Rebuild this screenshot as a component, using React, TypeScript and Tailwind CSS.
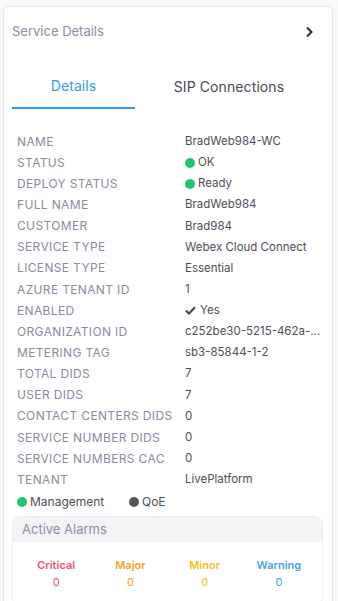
import React from "react";

const rows: { label: string; value: React.ReactNode }[] = [
  { label: "NAME", value: "BradWeb984-WC" },
  { label: "STATUS", value: <Dot text="OK" /> },
  { label: "DEPLOY STATUS", value: <Dot text="Ready" /> },
  { label: "FULL NAME", value: "BradWeb984" },
  { label: "CUSTOMER", value: "Brad984" },
  { label: "SERVICE TYPE", value: "Webex Cloud Connect" },
  { label: "LICENSE TYPE", value: "Essential" },
  { label: "AZURE TENANT ID", value: "1" },
  {
    label: "ENABLED",
    value: (
      <span className="flex items-center gap-[4px]">
        <svg width="11" height="9" viewBox="0 0 11 9">
          <path d="M1 4.6 L4 7.5 L10 1.2" fill="none" stroke="#4a4a55" strokeWidth="2.2" />
        </svg>
        Yes
      </span>
    ),
  },
  { label: "ORGANIZATION ID", value: "c252be30-5215-462a-..." },
  { label: "METERING TAG", value: "sb3-85844-1-2" },
  { label: "TOTAL DIDS", value: "7" },
  { label: "USER DIDS", value: "7" },
  { label: "CONTACT CENTERS DIDS", value: "0" },
  { label: "SERVICE NUMBER DIDS", value: "0" },
  { label: "SERVICE NUMBERS CAC", value: "0" },
  { label: "TENANT", value: "LivePlatform" },
];

function Dot({ text }: { text: string }) {
  return (
    <span className="flex items-center gap-[3px]">
      <span className="inline-block w-[10px] h-[10px] rounded-full bg-[#22c473]" />
      {text}
    </span>
  );
}

export default function App() {
  return (
    <div
      className="w-[338px] h-[601px] bg-[#f9f9fa] pt-[6px] pl-[3px] overflow-hidden"
      style={{ fontFamily: "Inter, 'Noto Sans', sans-serif" }}
    >
      <div className="w-[330px] h-[620px] bg-white border border-[#e6e6ea] rounded-[4px] px-[8px]">
        <div className="flex items-center justify-between h-[50px] pr-[10px]">
          <span className="text-[13px] text-[#8e8ea3]">Service Details</span>
          <svg width="9" height="12" viewBox="0 0 9 12">
            <path d="M2 1.5 L6.5 6 L2 10.5" fill="none" stroke="#2b2b33" strokeWidth="2" />
          </svg>
        </div>
        <div className="flex mt-[7px] h-[45px]">
          <div className="w-[123px] flex items-center justify-center border-b-2 border-[#2f9bf0] text-[14px] text-[#3a98ec] tracking-[0.1px]">
            Details
          </div>
          <div className="w-[188px] flex items-center justify-center text-[14px] text-[#4a4a52] tracking-[0.1px]">
            SIP Connections
          </div>
        </div>
        <div className="mt-[22px] pl-[5px]">
          {rows.map((r) => (
            <div key={r.label} className="flex items-center h-[21.15px] whitespace-nowrap">
              <span className="w-[168px] text-[12px] tracking-[0.35px] text-[#8a8aa0]">{r.label}</span>
              <span className="text-[11.5px] text-[#4e4e58]">{r.value}</span>
            </div>
          ))}
          <div className="flex items-center h-[21px] text-[12px] text-[#4e4e58] mt-[1px]">
            <span className="flex items-center gap-[3px] w-[112px]">
              <span className="inline-block w-[10px] h-[10px] rounded-full bg-[#22c473]" />
              Management
            </span>
            <span className="flex items-center gap-[3px]">
              <span className="inline-block w-[10px] h-[10px] rounded-full bg-[#555559]" />
              QoE
            </span>
          </div>
        </div>
        <div className="mt-[4px] w-[311px] rounded-[8px] border border-[#ececf0] overflow-hidden">
          <div className="h-[25px] bg-[#f4f4f7] flex items-center px-[9px] text-[13px] text-[#8e8ea3]">
            Active Alarms
          </div>
          <div className="grid grid-cols-4 pt-[15px] pb-[14px] px-[6px] text-[11px] text-center">
            <div className="text-[#f0506e]">
              <div className="font-semibold">Critical</div>
              <div>0</div>
            </div>
            <div className="text-[#f7a128]">
              <div className="font-semibold">Major</div>
              <div>0</div>
            </div>
            <div className="text-[#f0c419]">
              <div className="font-semibold">Minor</div>
              <div>0</div>
            </div>
            <div className="text-[#4aa3e6]">
              <div className="font-semibold">Warning</div>
              <div>0</div>
            </div>
          </div>
        </div>
      </div>
    </div>
  );
}
